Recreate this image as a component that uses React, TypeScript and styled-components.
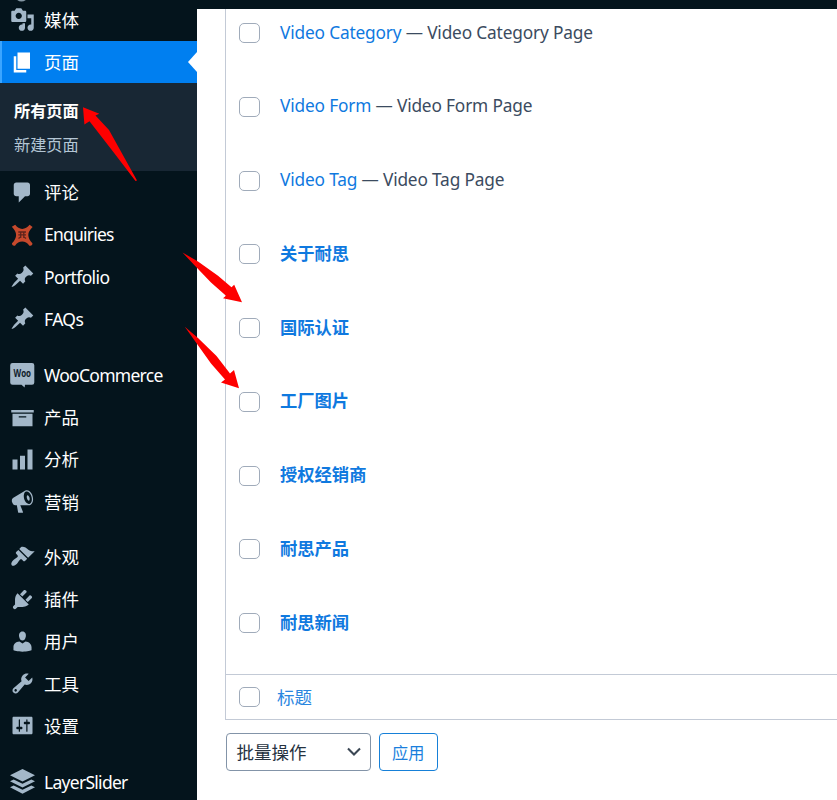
import React from "react";
import styled, { createGlobalStyle, css } from "styled-components";

const Global = createGlobalStyle`
  * { box-sizing: border-box; }
  body {
    margin: 0;
    background: #fff;
    overflow: hidden;
    font-family: "Noto Sans", "Noto Sans CJK SC", sans-serif;
  }
`;

const Page = styled.div`
  position: relative;
  display: flex;
  flex-direction: column;
  width: 837px;
  height: 800px;
  overflow: hidden;
`;

const TopBar = styled.header`
  flex: none;
  height: 9px;
  padding-left: 14px;
  background: #04141c;
`;

const LogoRing = styled.svg`
  display: block;
  width: 15px;
  height: 3px;
`;

const Body = styled.div`
  display: flex;
  flex: 1;
  min-height: 0;
`;

const Sidebar = styled.nav`
  flex: none;
  width: 197px;
  background: #04141c;
`;

const MenuList = styled.div`
  margin-top: -10.2px;
`;

const MenuItem = styled.a<{ $active?: boolean; $gap?: number }>`
  position: relative;
  display: flex;
  align-items: center;
  height: 42.2px;
  margin-top: ${(p) => p.$gap ?? 0}px;
  padding-left: 10px;
  color: ${(p) => (p.$active ? "#fff" : "#a3b7c8")};
  ${(p) =>
    p.$active &&
    css`
      background: #007ff0;
      box-shadow: inset 2px 0 0 #3ba5ff;
      &::after {
        content: "";
        position: absolute;
        right: 0;
        top: 11px;
        border: solid transparent;
        border-width: 10px 9.5px 10px 0;
        border-right-color: #fff;
      }
    `}
`;

const MenuIcon = styled.svg`
  flex: none;
  width: 25px;
  height: 25px;
  fill: currentColor;
`;

const MenuLabel = styled.span<{ $track?: number }>`
  margin-left: 9px;
  color: #fff;
  font-size: 17.5px;
  line-height: 24px;
  letter-spacing: ${(p) => p.$track ?? 0}px;
  white-space: nowrap;
`;

const SubMenu = styled.div`
  display: flex;
  flex-direction: column;
  height: 88px;
  padding: 10.4px 0 0 14px;
  background: #182734;
`;

const SubLink = styled.a<{ $current?: boolean }>`
  height: 34.5px;
  line-height: 34px;
  font-size: 16.2px;
  font-weight: ${(p) => (p.$current ? 700 : 400)};
  color: ${(p) => (p.$current ? "#fff" : "#b4c6d4")};
`;

const Main = styled.main`
  flex: 1;
  min-width: 0;
  padding-left: 28px;
`;

const Table = styled.section`
  height: 711px;
  border: solid #c3cad6;
  border-width: 0 0 1px 1px;
`;

const Rows = styled.div`
  height: 665px;
`;

const Row = styled.div`
  display: flex;
  align-items: flex-start;
  height: 73.75px;
  padding: 14px 0 0 13px;
`;

const Check = styled.input.attrs({ type: "checkbox" })`
  flex: none;
  appearance: none;
  width: 21px;
  height: 20px;
  margin: 0;
  border: 1.5px solid #a0abba;
  border-radius: 5px;
  background: #fff;
`;

const Title = styled.span<{ $bold?: boolean; $track?: number }>`
  margin: -2.4px 0 0 20px;
  color: #3b4b60;
  font-size: 17.3px;
  line-height: 24px;
  font-weight: ${(p) => (p.$bold ? 700 : 400)};
  letter-spacing: ${(p) => p.$track ?? 0}px;
  white-space: nowrap;
`;

const Link = styled.a`
  color: #0f79df;
`;

const TableFoot = styled.div`
  display: flex;
  align-items: center;
  height: 45px;
  padding: 0 0 1px 13px;
  border-top: 1px solid #c3cad6;
`;

const FootLink = styled.a`
  margin-left: 17px;
  font-size: 17.5px;
  line-height: 24px;
  color: #2a86df;
`;

const Actions = styled.div`
  display: flex;
  gap: 8px;
  padding: 13px 0 0 0.5px;
`;

const SelectBox = styled.div`
  display: flex;
  align-items: center;
  justify-content: space-between;
  width: 145px;
  height: 37.5px;
  padding: 0 9px 0 10px;
  border: 1px solid #8394a8;
  border-radius: 4px;
  color: #26323f;
  font-size: 17.5px;
`;

const Chevron = styled.svg`
  width: 14px;
  height: 9px;
  fill: none;
  stroke: #3b4754;
  stroke-width: 2.1;
`;

const Apply = styled.button`
  width: 59.5px;
  height: 37.5px;
  padding: 0;
  border: 1.3px solid #1680d8;
  border-radius: 4px;
  background: #fff;
  color: #1a7fdd;
  font: 16.2px "Noto Sans", "Noto Sans CJK SC", sans-serif;
`;

const Arrows = styled.svg`
  position: absolute;
  inset: 0;
  width: 837px;
  height: 800px;
  fill: #fe0000;
  pointer-events: none;
`;

const paths: Record<string, string> = {
  media:
    "M13 11V4c0-.55-.45-1-1-1h-1.67L9 1H5L3.67 3H2c-.55 0-1 .45-1 1v7c0 .55.45 1 1 1h10c.55 0 1-.45 1-1zM7 4.500c1.380 0 2.500 1.120 2.500 2.500S8.380 9.500 7 9.500 4.500 8.380 4.500 7 5.620 4.500 7 4.500zM14 6h5v10.500c0 1.380-1.120 2.500-2.500 2.500S14 17.880 14 16.500s1.120-2.500 2.500-2.500c.17 0 .34.02.5.05V9h-3V6zm-4 8.050V13h2v3.500c0 1.380-1.120 2.500-2.500 2.500S7 17.880 7 16.500 8.120 14 9.500 14c.17 0 .34.02.5.05z",
  page: "M6 15V2h10v13H6zm-1 1h8v2H3V5h2v11z",
  comments:
    "M5 2h9c1.1 0 2 .9 2 2v7c0 1.1-.9 2-2 2h-2l-5 5v-5H5c-1.1 0-2-.9-2-2V4c0-1.1.9-2 2-2z",
  pin: "M10.44 3.02l1.82-1.82 6.36 6.35-1.83 1.82c-1.05-.68-2.48-.57-3.41.36l-.75.75c-.92.93-1.04 2.35-.35 3.41l-1.83 1.82-2.41-2.41-2.8 2.79c-.42.42-3.38 2.71-3.8 2.29s1.86-3.39 2.28-3.81l2.79-2.79L4.1 9.36l1.83-1.82c1.05.69 2.48.57 3.4-.36l.75-.75c.93-.92 1.05-2.35.36-3.41z",
  archive: "M19 4v2H1V4h18zM2 7h16v10H2V7zm11 3V9H7v1h6z",
  chart: "M18 18V2h-4v16h4zm-6 0V7H8v11h4zm-6 0v-8H2v8h4z",
  megaphone:
    "M18.15 5.94c.46 1.62.38 3.22-.02 4.48-.42 1.28-1.26 2.18-2.3 2.48-.16.06-.26.06-.4.06-.06.02-.12.02-.18.02-.06.02-.14.02-.22.02h-6.8l2.22 5.5c.02.14-.06.26-.14.34-.08.1-.24.16-.34.16H6.95c-.1 0-.26-.06-.34-.16-.08-.08-.16-.2-.14-.34l-1-5.5H4.25l-.02-.02c-.5.06-1.08-.18-1.54-.62s-.88-1.08-1.06-1.88c-.24-.8-.2-1.56-.02-2.2.18-.62.58-1.08 1.06-1.3l.02-.02 9-5.4c.1-.06.18-.1.24-.16.06-.04.14-.08.24-.12.16-.08.28-.12.5-.18 1.04-.3 2.24.1 3.22.98s1.84 2.24 2.26 3.86zm-2.58 5.98c.4-.1.74-.34 1.04-.7.58-.7.86-1.76.86-3.04 0-.64-.1-1.3-.28-1.98-.34-1.36-1.02-2.5-1.78-3.24s-1.68-1.1-2.46-.88c-.82.22-1.4.96-1.7 2-.32 1.04-.28 2.36.06 3.72.38 1.36 1 2.5 1.8 3.24.78.74 1.62 1.1 2.46.88zm-.4-2.6c-.5.14-1.3-.7-1.6-1.9-.34-1.2-.1-2.3.4-2.44s1.3.7 1.6 1.9c.34 1.2.1 2.3-.4 2.44z",
  brush:
    "M14.48 11.06L7.41 3.99l1.5-1.5c.5-.56 2.3-.47 3.51.32 1.21.8 1.43 1.28 2.91 2.1 1.18.64 2.45 1.26 4.45.85zm-.71.71L6.7 4.7 4.93 6.47c-.39.39-.39 1.02 0 1.41l1.06 1.06c.39.39.39 1.03 0 1.42-.6.6-1.43 1.11-2.21 1.69-.35.26-.7.53-1.01.84C1.43 14.23.4 16.08 1.4 17.07c.99 1 2.84-.03 4.18-1.36.31-.31.58-.66.85-1.02.57-.78 1.08-1.61 1.69-2.21.39-.39 1.02-.39 1.41 0l1.06 1.06c.39.39 1.02.39 1.41 0z",
  plugin:
    "M13.11 4.36L9.87 7.6 8 5.73l3.24-3.24c.35-.34 1.05-.2 1.56.32.52.51.66 1.21.31 1.55zm-8 1.77l.91-1.12 9.01 9.01-1.19.84c-.71.71-2.63 1.16-3.82 1.16H6.14L4.9 17.26c-.59.59-1.54.59-2.12 0-.59-.58-.59-1.53 0-2.12l1.24-1.24v-3.88c0-1.13.4-3.19 1.09-3.89zm7.26 3.97l3.24-3.24c.34-.35 1.04-.21 1.55.31.52.51.66 1.21.31 1.55l-3.24 3.25z",
  user: "M10 9.25c-2.27 0-2.73-3.44-2.73-3.44C7 4.02 7.82 2 9.97 2c2.16 0 2.98 2.02 2.71 3.81 0 0-.41 3.44-2.68 3.44zm0 2.3L12.400 10c2.71 0 4.84 2.33 4.84 4.53v2.49s-3.65 1.13-7.24 1.13c-3.65 0-7.24-1.13-7.24-1.13v-2.49c0-2.25 1.94-4.48 4.800-4.48z",
  tools:
    "M16.68 9.77c-1.34 1.34-3.3 1.67-4.95.99l-5.41 6.52c-.99.99-2.59.99-3.58 0s-.99-2.59 0-3.57l6.52-5.42c-.68-1.65-.35-3.61.99-4.95 1.28-1.28 3.12-1.62 4.72-1.06l-2.89 2.89 2.82 2.82 2.86-2.87c.53 1.58.18 3.39-1.08 4.65zM3.81 16.21c.4.39 1.04.39 1.43 0 .4-.4.4-1.04 0-1.43-.39-.4-1.03-.4-1.43 0-.39.39-.39 1.03 0 1.43z",
  settings:
    "M18 16V4c0-.55-.45-1-1-1H3c-.55 0-1 .45-1 1v12c0 .55.45 1 1 1h14c.55 0 1-.45 1-1zM8 11h1c.55 0 1 .45 1 1s-.45 1-1 1H8v1.5c0 .28-.22.5-.5.5s-.5-.22-.5-.5V13H6c-.55 0-1-.45-1-1s.45-1 1-1h1V5.5c0-.28.22-.5.5-.5s.5.22.5.5V11zm5-2h-1c-.55 0-1-.45-1-1s.45-1 1-1h1V5.5c0-.28.22-.5.5-.5s.5.22.5.5V7h1c.55 0 1 .45 1 1s-.45 1-1 1h-1v5.5c0 .28-.22.5-.5.5s-.5-.22-.5-.5V9z",
};

const EnquiriesIcon = () => (
  <MenuIcon viewBox="0 0 25 25">
    <path
      fill="#c6492c"
      d="M1.800 4.800L5.200 2.800C7.200 5.500 9.500 6.900 12.200 6.900C15 6.900 17.500 5.500 19.600 2.800L22.600 5C19.600 8 18.300 10.500 18.300 13C18.300 15.800 19.800 18.600 22.400 21.300C22.600 23.200 21.300 24.200 19.400 23.700C17.300 20.900 15 19.500 12.200 19.500C9.300 19.500 7 20.900 5 23.700C3.200 24.200 1.800 23.200 2 21.300C4.800 18.400 6.100 15.800 6.100 13C6.100 10.300 4.700 7.700 1.800 4.800Z"
    />
    <path
      d="M8.300 10H16M8.300 12.800H16M10.700 10V16M13.800 10V16M8.500 16.600L10.500 15M16 16.600L14 15"
      fill="none"
      stroke="#5d241c"
      strokeWidth="1.300"
    />
  </MenuIcon>
);

const WooText = styled.text`
  fill: #10202b;
  font: 700 10px "Open Sans", sans-serif;
`;

const WooIcon = () => (
  <MenuIcon viewBox="0 0 25 25">
    <path d="M2.500 0H22a2.300 2.300 0 0 1 2.300 2.300V19.500a2.300 2.300 0 0 1-2.300 2.300H15L14.600 24.500L11.500 21.800H2.500A2.300 2.300 0 0 1 .2 19.500V2.300A2.300 2.300 0 0 1 2.500 0Z" />
    <WooText x="3.5" y="14" textLength="17.500" lengthAdjust="spacingAndGlyphs">
      Woo
    </WooText>
  </MenuIcon>
);

const LayersIcon = () => (
  <MenuIcon viewBox="0 0 25 25">
    <path d="M12.500 0L25 6.200L12.500 12.400L0 6.200Z" />
    <path d="M0 12.200L3.700 10.400L12.500 14.700L21.300 10.400L25 12.200L12.500 18.400Z" />
    <path d="M0 18.300L3.700 16.500L12.500 20.800L21.300 16.500L25 18.300L12.500 24.700Z" />
  </MenuIcon>
);

const Glyph = ({ name }: { name: string }) => {
  if (name === "enquiries") return <EnquiriesIcon />;
  if (name === "woo") return <WooIcon />;
  if (name === "layers") return <LayersIcon />;
  return (
    <MenuIcon viewBox="0 0 20 20">
      <path fillRule="evenodd" d={paths[name]} />
    </MenuIcon>
  );
};

type Entry = { icon: string; label: string; gap?: number; track?: number };

const entries: Entry[] = [
  { icon: "comments", label: "评论" },
  { icon: "enquiries", label: "Enquiries", track: -0.78 },
  { icon: "pin", label: "Portfolio", track: -0.62 },
  { icon: "pin", label: "FAQs", track: -0.6 },
  { icon: "woo", label: "WooCommerce", gap: 14, track: -0.72 },
  { icon: "archive", label: "产品" },
  { icon: "chart", label: "分析" },
  { icon: "megaphone", label: "营销" },
  { icon: "brush", label: "外观", gap: 13.2 },
  { icon: "plugin", label: "插件" },
  { icon: "user", label: "用户" },
  { icon: "tools", label: "工具" },
  { icon: "settings", label: "设置" },
  { icon: "layers", label: "LayerSlider", gap: 13.6, track: -0.72 },
];

const rows: { title: string; note?: string }[] = [
  { title: "Video Category", note: "Video Category Page" },
  { title: "Video Form", note: "Video Form Page" },
  { title: "Video Tag", note: "Video Tag Page" },
  { title: "关于耐思" },
  { title: "国际认证" },
  { title: "工厂图片" },
  { title: "授权经销商" },
  { title: "耐思产品" },
  { title: "耐思新闻" },
];

export default function App() {
  return (
    <Page>
      <Global />
      <TopBar>
        <LogoRing viewBox="0 0 15 3">
          <path d="M1 -3Q7.500 4.500 14 -3" fill="none" stroke="#8496a3" strokeWidth="1.500" />
        </LogoRing>
      </TopBar>
      <Body>
        <Sidebar>
          <MenuList>
            <MenuItem>
              <Glyph name="media" />
              <MenuLabel>媒体</MenuLabel>
            </MenuItem>
            <MenuItem $active>
              <Glyph name="page" />
              <MenuLabel>页面</MenuLabel>
            </MenuItem>
            <SubMenu>
              <SubLink $current>所有页面</SubLink>
              <SubLink>新建页面</SubLink>
            </SubMenu>
            {entries.map((e) => (
              <MenuItem key={e.label} $gap={e.gap}>
                <Glyph name={e.icon} />
                <MenuLabel $track={e.track}>{e.label}</MenuLabel>
              </MenuItem>
            ))}
          </MenuList>
        </Sidebar>
        <Main>
          <Table>
            <Rows>
              {rows.map((r) => (
                <Row key={r.title}>
                  <Check />
                  <Title $bold={!r.note} $track={r.note ? -0.17 : 0}>
                    <Link>{r.title}</Link>
                    {r.note && ` — ${r.note}`}
                  </Title>
                </Row>
              ))}
            </Rows>
            <TableFoot>
              <Check />
              <FootLink>标题</FootLink>
            </TableFoot>
          </Table>
          <Actions>
            <SelectBox>
              批量操作
              <Chevron viewBox="0 0 14 9">
                <path d="M1 1.500L7 7.500L13 1.500" />
              </Chevron>
            </SelectBox>
            <Apply>应用</Apply>
          </Actions>
        </Main>
      </Body>
      <Arrows viewBox="0 0 837 800">
        <path d="M83 107.300L99.300 113.700L95.500 115.500L109 130L137 180.500L135.500 181L114.500 153.500L89.500 121.300L84.400 124.600Z" />
        <path d="M182.500 252.500L198 261.500L218 275.800L231.500 287.300L234.200 284.700L242 302.300L223 298.300L226 295.700L211 282.500L194.700 265.500Z" />
        <path d="M184.800 326.800L198 338L216.500 356L230 373.500L234 370L239 388.300L221 382.500L225 379.500L211 363.500L196 342.500Z" />
      </Arrows>
    </Page>
  );
}
